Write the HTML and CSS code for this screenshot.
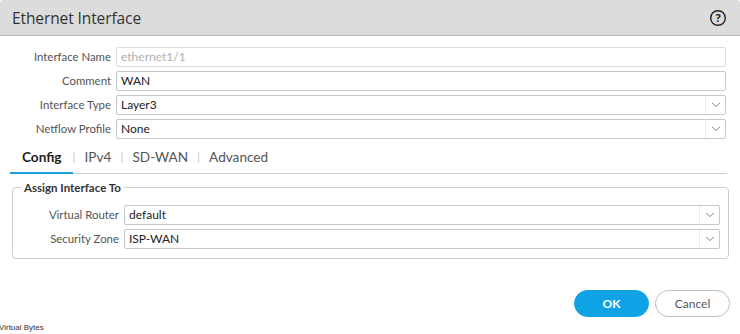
FILE: index.html
```html
<!DOCTYPE html>
<html>
<head>
<meta charset="utf-8">
<link rel="stylesheet" href="styles.css">
</head>
<body>
<div class="dialog">
  <div class="header">
    <div class="title">Ethernet Interface</div>
    <svg class="help" width="18" height="18" viewBox="0 0 18 18">
      <circle cx="9" cy="9" r="7.3" fill="none" stroke="#222" stroke-width="1.4"/>
      <text x="9" y="13" text-anchor="middle" font-family="Open Sans, sans-serif" font-size="11" font-weight="700" fill="#222">?</text>
    </svg>
  </div>
  <div class="form">
    <label class="lbl">Interface Name</label>
    <div class="field disabled">ethernet1/1</div>
    <label class="lbl">Comment</label>
    <div class="field">WAN</div>
    <label class="lbl">Interface Type</label>
    <div class="field select"><span class="val">Layer3</span><span class="arrow"><svg width="10" height="6" viewBox="0 0 10 6"><path d="M1 1 L5 4.5 L9 1" fill="none" stroke="#8a8a8a" stroke-width="1"/></svg></span></div>
    <label class="lbl">Netflow Profile</label>
    <div class="field select"><span class="val">None</span><span class="arrow"><svg width="10" height="6" viewBox="0 0 10 6"><path d="M1 1 L5 4.5 L9 1" fill="none" stroke="#8a8a8a" stroke-width="1"/></svg></span></div>
  </div>
  <div class="tabs">
    <div class="tab active">Config</div>
    <div class="sep">|</div>
    <div class="tab">IPv4</div>
    <div class="sep">|</div>
    <div class="tab">SD-WAN</div>
    <div class="sep">|</div>
    <div class="tab">Advanced</div>
  </div>
  <fieldset class="group">
    <legend>Assign Interface To</legend>
    <div class="grid">
      <label class="lbl">Virtual Router</label>
      <div class="field select"><span class="val">default</span><span class="arrow"><svg width="10" height="6" viewBox="0 0 10 6"><path d="M1 1 L5 4.5 L9 1" fill="none" stroke="#8a8a8a" stroke-width="1"/></svg></span></div>
      <label class="lbl">Security Zone</label>
      <div class="field select"><span class="val">ISP-WAN</span><span class="arrow"><svg width="10" height="6" viewBox="0 0 10 6"><path d="M1 1 L5 4.5 L9 1" fill="none" stroke="#8a8a8a" stroke-width="1"/></svg></span></div>
    </div>
  </fieldset>
  <div class="footer">
    <button class="btn ok">OK</button>
    <button class="btn cancel">Cancel</button>
  </div>
</div>
<div class="status">Virtual Bytes</div>
</body>
</html>
```
FILE: styles.css
```css
html, body {
  margin: 0;
  padding: 0;
  background: #ffffff;
}
body {
  width: 740px;
  height: 334px;
  overflow: hidden;
  font-family: Lato, "Open Sans", sans-serif;
  color: #333;
}
.dialog {
  width: 740px;
}
.header {
  height: 35px;
  background: #dcdcdc;
  border-bottom: 1px solid #b4b4b4;
  display: flex;
  align-items: center;
  justify-content: space-between;
  padding: 0 13px 0 12px;
  box-sizing: content-box;
  border-radius: 3px 3px 0 0;
}
.title {
  font-family: "Open Sans", sans-serif;
  font-size: 15.5px;
  color: #333;
  letter-spacing: -0.1px;
}
.help {
  display: block;
}
.form {
  display: grid;
  grid-template-columns: 101px 1fr;
  column-gap: 5px;
  row-gap: 4px;
  padding: 11px 14px 0 10px;
}
.lbl {
  font-size: 11.4px;
  color: #555;
  text-align: right;
  line-height: 20px;
  white-space: nowrap;
}
.field {
  height: 20px;
  box-sizing: border-box;
  border: 1px solid #c8c8c8;
  border-radius: 2px;
  font-size: 12px;
  line-height: 18px;
  padding-left: 4px;
  color: #222;
  display: flex;
  align-items: center;
  background: #fff;
}
.field.disabled {
  color: #b0b0b0;
  border-color: #dcdcdc;
}
.select .val {
  flex: 1;
}
.select .arrow {
  width: 19px;
  height: 18px;
  border-left: 1px solid #ececec;
  display: flex;
  align-items: center;
  justify-content: center;
}
.select .arrow svg {
  display: block;
}
.tabs {
  display: flex;
  align-items: flex-end;
  margin: 6px 13px 0 10px;
  height: 28px;
  border-bottom: 1px solid #cfcfcf;
}
.tab {
  font-size: 13.6px;
  color: #555;
  padding: 0 0 7px;
  border-bottom: 2px solid transparent;
  margin-bottom: -1px;
  line-height: 16px;
}
.tab.active {
  color: #222;
  font-weight: 700;
  border-bottom-color: #1aa0dc;
  padding-left: 12px;
  padding-right: 11px;
}
.sep {
  color: #c8c8c8;
  font-size: 12px;
  line-height: 16px;
  padding: 0 9px 8px;
  margin-bottom: 0;
}
.tab.active + .sep {
  padding-left: 0;
}
.group {
  margin: 6px 11px 0 12px;
  border: 1px solid #cccccc;
  border-radius: 4px;
  padding: 0 8px 9px 10px;
  min-width: 0;
}
.group legend {
  font-size: 11.5px;
  font-weight: 700;
  color: #333;
  line-height: 15px;
  padding: 0 3px;
  margin-left: -2px;
}
.grid {
  display: grid;
  grid-template-columns: 96px 1fr;
  column-gap: 5px;
  row-gap: 4px;
  padding-top: 10px;
}
.footer {
  display: flex;
  justify-content: flex-end;
  gap: 6px;
  margin-top: 31px;
  padding-right: 10px;
}
.btn {
  width: 75px;
  height: 27px;
  border-radius: 14px;
  font-family: Lato, sans-serif;
  font-size: 12px;
  margin: 0;
  padding: 0;
}
.ok {
  background: #0fa3e6;
  border: 1px solid #0fa3e6;
  color: #fff;
  font-weight: 700;
}
.cancel {
  background: #fff;
  border: 1px solid #bdbdbd;
  color: #555;
}
.status {
  font-family: "Liberation Sans", Arial, sans-serif;
  font-size: 8px;
  line-height: 10px;
  margin-top: 6px;
  margin-left: -1px;
  color: #333;
}
```
